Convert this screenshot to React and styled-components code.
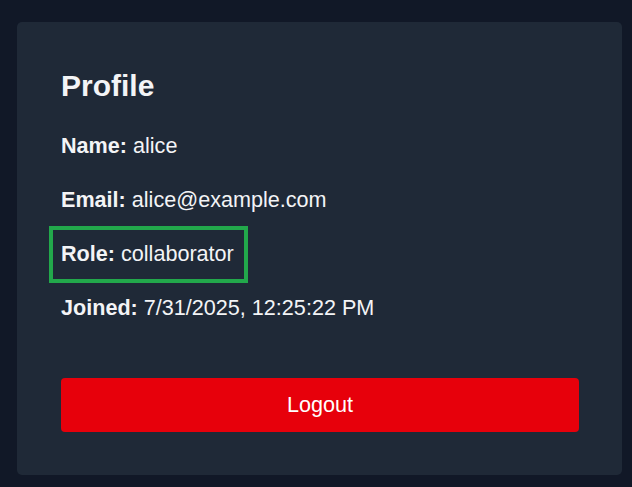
import React from "react";
import styled, { createGlobalStyle } from "styled-components";

const GlobalStyle = createGlobalStyle`
  html, body {
    margin: 0;
    background: #111827;
  }
  body {
    padding: 22px 10px 12px 17px;
    font-family: "Liberation Sans", Arial, sans-serif;
    color: #f3f4f6;
  }
`;

const Card = styled.div`
  width: 605px;
  box-sizing: border-box;
  background: #1f2937;
  border-radius: 5px;
  padding: 47px 43px 43px 44px;
  display: flex;
  flex-direction: column;
`;

const Title = styled.h2`
  margin: 0 0 31px;
  font-size: 30px;
  line-height: 34px;
  font-weight: 700;
  color: #f3f4f6;
`;

const Fields = styled.div`
  display: flex;
  flex-direction: column;
  align-items: flex-start;
  gap: 30px;
`;

const Row = styled.p`
  position: relative;
  margin: 0;
  font-size: 21.6px;
  line-height: 24px;
  color: #f3f4f6;

  strong {
    font-weight: 700;
  }

  ${({ $highlight }) =>
    $highlight &&
    `
    &::after {
      content: "";
      position: absolute;
      top: -16px;
      bottom: -17px;
      left: -12px;
      right: -14px;
      border: 4px solid #22a84b;
      pointer-events: none;
    }
  `}
`;

const LogoutButton = styled.button`
  margin-top: 58px;
  height: 54px;
  width: 100%;
  border: none;
  border-radius: 4px;
  background: #e7000b;
  color: #ffffff;
  font-family: "Liberation Sans", Arial, sans-serif;
  font-size: 21.6px;
  cursor: pointer;
`;

const user = {
  name: "alice",
  email: "alice@example.com",
  role: "collaborator",
  joined: "7/31/2025, 12:25:22 PM",
};

export default function App() {
  return (
    <>
      <GlobalStyle />
      <Card>
        <Title>Profile</Title>
        <Fields>
          <Row>
            <strong>Name:</strong> {user.name}
          </Row>
          <Row>
            <strong>Email:</strong> {user.email}
          </Row>
          <Row $highlight>
            <strong>Role:</strong> {user.role}
          </Row>
          <Row>
            <strong>Joined:</strong> {user.joined}
          </Row>
        </Fields>
        <LogoutButton>Logout</LogoutButton>
      </Card>
    </>
  );
}
